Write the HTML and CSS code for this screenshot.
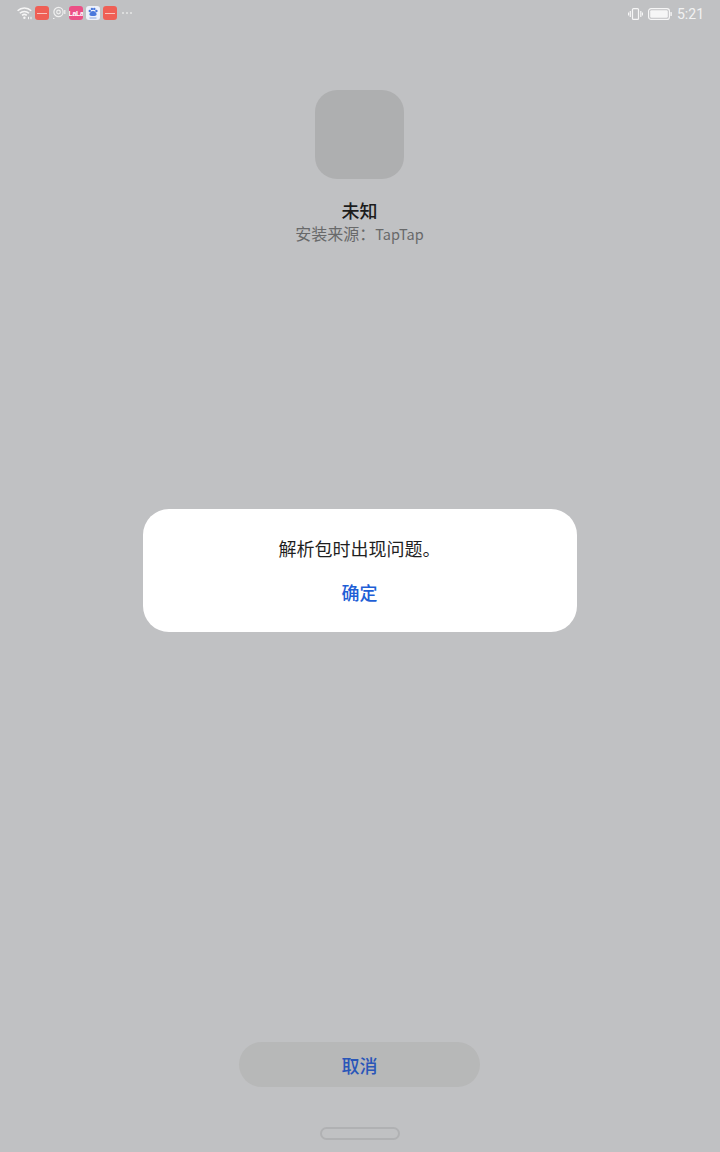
FILE: index.html
```html
<!DOCTYPE html>
<html lang="zh-CN">
<head>
    <meta charset="utf-8">
    <title>未知</title>
    <link rel="stylesheet" href="styles.css">
</head>
<body>
<div class="screen">
    <div class="statusbar">
        <div class="status-left">
            <svg class="ic-wifi" width="16" height="14" viewBox="0 0 16 14" fill="none" stroke="#f6f6f6" stroke-width="1.5">
                <path d="M.6 4.800C4.400 1 10.400 1 14.200 4.800"/>
                <path d="M2.800 7.200C5.400 4.800 9.400 4.800 12 7.200"/>
                <path d="M5 9.400C6.400 8.200 8.400 8.200 9.800 9.400"/>
                <circle cx="7.400" cy="11.800" r="1.200" fill="#f6f6f6" stroke="none"/>
                <path d="M11.500 10.800v2.400M14 10.800v2.400" stroke-width="1"/>
            </svg>
            <span class="app-icon red"><i></i></span>
            <svg class="ic-camera" width="14" height="14" viewBox="0 0 14 14" fill="none" stroke="#f0f0f0" stroke-width="1.200">
                <circle cx="6.500" cy="6" r="4.600"/>
                <circle cx="6.500" cy="6" r="1.800"/>
                <path d="M12.800 4v4"/>
                <path d="M1 12.500h1.500"/>
            </svg>
            <span class="app-icon pink">LaLa</span>
            <span class="app-icon paw">
                <svg width="14" height="14" viewBox="0 0 14 14" fill="#4a78dc">
                    <circle cx="3.800" cy="5" r="1.200"/>
                    <circle cx="5.900" cy="2.900" r="1.200"/>
                    <circle cx="8.300" cy="2.900" r="1.200"/>
                    <circle cx="10.400" cy="5" r="1.200"/>
                    <path d="M7 5c2 0 3.600 2 3.600 3.400S8.800 10 7 10 3.400 9.800 3.400 8.400 5 5 7 5z"/>
                    <rect x="3.500" y="11.300" width="7" height="1.400" fill="#a9bce6"/>
                </svg>
            </span>
            <span class="app-icon red"><i></i></span>
            <span class="more">
                <b></b><b></b><b></b>
            </span>
        </div>
        <div class="status-right">
            <svg width="15" height="14" viewBox="0 0 15 14" fill="none" stroke="#f6f6f6" stroke-width="1.200">
                <rect x="4.500" y="1.600" width="6" height="10.800" rx="1"/>
                <path d="M2.300 4v6M12.800 4v6"/>
                <path d="M.6 5.500v3M14.400 5.500v3"/>
            </svg>
            <svg width="24" height="14" viewBox="0 0 24 14" fill="none">
                <rect x=".6" y="1.600" width="20.800" height="10.800" rx="2.500" stroke="#f6f6f6" stroke-width="1.200"/>
                <rect x="2.200" y="3.200" width="17.600" height="7.600" rx="1.200" fill="#f6f6f6"/>
                <rect x="22.400" y="5" width="1.400" height="4" rx=".6" fill="#f6f6f6"/>
            </svg>
            <span class="clock">5:21</span>
        </div>
    </div>

    <div class="app-info">
        <div class="app-placeholder"></div>
        <div class="app-name">未知</div>
        <div class="app-source">安装来源：<span class="src-name">TapTap</span></div>
    </div>

    <div class="bottom">
        <button class="cancel">取消</button>
        <div class="home-pill"></div>
    </div>

    <div class="dialog">
        <div class="dialog-msg">解析包时出现问题。</div>
        <button class="dialog-ok">确定</button>
    </div>
</div>
</body>
</html>
```

FILE: styles.css
```css
* { box-sizing: border-box; }
html, body { margin: 0; padding: 0; }
body { font-family: "Noto Sans CJK SC", "Noto Sans", sans-serif; background: #c0c1c3; }
button { font-family: inherit; border: none; padding: 0; cursor: pointer; }

.screen { position: relative; width: 720px; height: 1152px; display: flex; flex-direction: column; background: #c0c1c3; overflow: hidden; }

.statusbar { height: 28px; padding: 0 16px 2px 17px; display: flex; justify-content: space-between; align-items: flex-start; flex-shrink: 0; }
.status-left { display: flex; align-items: center; gap: 3px; height: 26px; }
.ic-wifi { margin-right: -1px; }
.status-right { display: flex; align-items: center; gap: 5px; height: 28px; }
.clock { font-family: "Roboto", sans-serif; font-size: 14px; color: #f2f2f2; line-height: 1; }

.app-icon { width: 14px; height: 14px; border-radius: 3px; display: flex; align-items: center; justify-content: center; overflow: hidden; }
.app-icon.red { background: #ef5f55; }
.app-icon.red i { display: block; width: 10px; height: 1px; background: #f9c4bd; }
.app-icon.pink { background: #ec4f86; color: #fff; font-family: "Liberation Sans", sans-serif; font-size: 7px; font-weight: 700; letter-spacing: -.3px; }
.app-icon.paw { background: #eef1fa; }
.more { display: flex; gap: 2px; margin-left: 2px; }
.more b { width: 2px; height: 2px; border-radius: 50%; background: #e6e6e6; }

.app-info { display: flex; flex-direction: column; align-items: center; margin-top: 62px; padding-right: 1px; }
.app-placeholder { width: 89px; height: 89px; border-radius: 22px; background: #aeafb0; }
.app-name { margin-top: 19px; font-size: 18px; line-height: 24px; font-weight: 500; color: #1c1c1c; }
.app-source { font-size: 16px; line-height: 22px; color: #68696a; }
.src-name { font-size: 14.5px; }

.bottom { margin-top: auto; display: flex; flex-direction: column; align-items: center; padding: 0 1px 12px 0; }
.cancel { width: 241px; height: 45px; border-radius: 23px; background: #b7b8b8; color: #2a56b8; font-size: 18px; font-weight: 500; }
.home-pill { width: 80px; height: 13px; margin: 40px 0 0 1px; border: 2px solid #b0b1b3; border-radius: 7px; }

.dialog { position: absolute; left: 143px; top: 509px; width: 434px; height: 123px; background: #fff; border-radius: 26px; display: flex; flex-direction: column; align-items: center; padding-right: 1px; }
.dialog-msg { margin-top: 27px; font-size: 18px; line-height: 24px; color: #1f1f1f; }
.dialog-ok { margin-top: 20px; background: none; color: #1f5fd6; font-size: 18px; line-height: 24px; font-weight: 500; }
```
